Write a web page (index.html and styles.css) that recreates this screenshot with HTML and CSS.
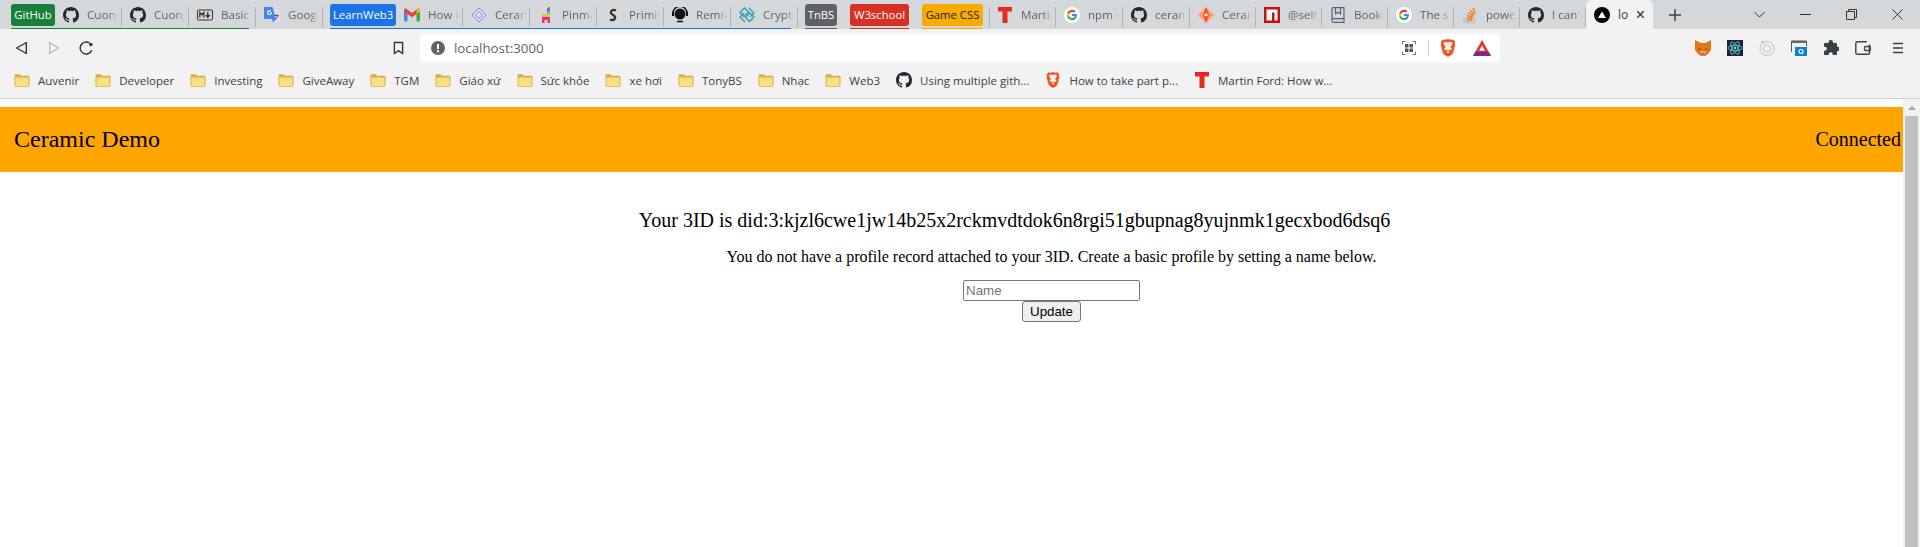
FILE: index.html
```html
<!DOCTYPE html>
<html lang="en">
<head>
  <meta charset="UTF-8" />
  <title>localhost:3000</title>
  <link rel="stylesheet" href="styles.css">
</head>
<body>

  <!-- shared icons -->
  <svg class="defs" width="0" height="0">
    <symbol id="gh" viewBox="0 0 16 16">
      <path fill="#24292e" d="M8 0C3.58 0 0 3.58 0 8c0 3.54 2.29 6.53 5.47 7.59.4.07.55-.17.55-.38 0-.19-.01-.82-.01-1.49-2.01.37-2.53-.49-2.69-.94-.09-.23-.48-.94-.82-1.13-.28-.15-.68-.52-.01-.53.63-.01 1.08.58 1.23.82.72 1.21 1.87.87 2.33.66.07-.52.28-.87.51-1.07-1.78-.2-3.64-.89-3.64-3.95 0-.87.31-1.59.82-2.15-.08-.2-.36-1.02.08-2.12 0 0 .67-.21 2.2.82.64-.18 1.32-.27 2-.27.68 0 1.36.09 2 .27 1.53-1.04 2.2-.82 2.2-.82.44 1.1.16 1.92.08 2.12.51.56.82 1.27.82 2.15 0 3.07-1.87 3.75-3.65 3.95.29.25.54.73.54 1.48 0 1.07-.01 1.93-.01 2.2 0 .21.15.46.55.38A8.013 8.013 0 0016 8c0-4.42-3.58-8-8-8z"/>
    </symbol>
    <symbol id="goog" viewBox="0 0 24 24">
      <circle cx="12" cy="12" r="12" fill="#fff"/>
      <g transform="translate(3.6 3.6) scale(.7)">
        <path fill="#4285F4" d="M22.56 12.25c0-.78-.07-1.53-.2-2.25H12v4.26h5.92c-.26 1.37-1.04 2.53-2.21 3.31v2.77h3.57c2.08-1.92 3.28-4.74 3.28-8.09z"/>
        <path fill="#34A853" d="M12 23c2.97 0 5.46-.98 7.28-2.66l-3.57-2.77c-.98.66-2.23 1.06-3.71 1.06-2.86 0-5.29-1.93-6.16-4.53H2.18v2.84C3.99 20.53 7.7 23 12 23z"/>
        <path fill="#FBBC05" d="M5.84 14.09c-.22-.66-.35-1.36-.35-2.09s.13-1.43.35-2.09V7.07H2.18C1.43 8.55 1 10.22 1 12s.43 3.45 1.18 4.93l3.66-2.84z"/>
        <path fill="#EA4335" d="M12 5.38c1.62 0 3.06.56 4.21 1.64l3.15-3.15C17.45 2.09 14.97 1 12 1 7.7 1 3.99 3.47 2.18 7.07l3.66 2.84c.87-2.6 3.3-4.53 6.16-4.53z"/>
      </g>
    </symbol>
    <symbol id="ted" viewBox="0 0 16 16">
      <path fill="#e62b1e" d="M1 0h14v4.500h-4.500V16h-5V4.500H1z"/>
    </symbol>
    <symbol id="ceramic" viewBox="0 0 16 16">
      <path fill="#ff9a73" d="M8 0l8 8-8 8-8-8z"/>
      <path fill="#f4511e" d="M8 0l3 8-3 8-3-8z"/>
      <path fill="#fff" d="M6.500 6.800h3v2.400h-3z"/>
    </symbol>
    <symbol id="folder" viewBox="0 0 16 13">
      <path fill="#d9ad48" d="M.5 1.500C.5.800 1 .3 1.700.3h4L7 1.800h7.300c.7 0 1.200.5 1.200 1.200v8.500c0 .7-.5 1.200-1.200 1.200H1.700c-.7 0-1.200-.5-1.200-1.200z"/>
      <path fill="#fcdf80" d="M1.500 3.500h13v8c0 .2-.2.400-.4.400H1.900c-.2 0-.4-.2-.4-.4z"/>
    </symbol>
    <symbol id="brave" viewBox="0 0 16 18">
      <path fill="#f1562b" d="M8 0l3 .8 2-.4 2.200 2.400-.6 1.400.6 1.800-2 7.400c-.4 1.300-1 1.900-2 2.500L8 18l-3.200-1.900c-1-.6-1.600-1.200-2-2.500l-2-7.400.6-1.800-.6-1.400L3 .4l2 .4z"/>
      <path fill="#fff" d="M8 3.200l3.500-.2.900 1.600-.9 1.600-1.300 1.800 1.700 1.800-1.400 1.500L9 10.700l-1 .8 1.500 1.200L8 14l-1.500-1.300 1.500-1.200-1-.8-1.500.6-1.400-1.500 1.700-1.800-1.300-1.800-.9-1.600.9-1.600z" opacity=".92"/>
    </symbol>
  </svg>

  <!-- browser chrome -->
  <header class="browser">
    <div class="tabstrip">
      <div class="group group-green">
        <span class="chip chip-green">GitHub</span>
        <div class="tab"><svg class="fav"><use href="#gh"/></svg><span class="tab-title">Cuong</span></div>
        <div class="tab"><svg class="fav"><use href="#gh"/></svg><span class="tab-title">Cuong</span></div>
        <div class="tab">
          <svg class="fav" viewBox="0 0 16 16"><rect x=".5" y="3" width="15" height="10" rx="1" fill="none" stroke="#333"/><path fill="none" stroke="#333" stroke-width="1.300" d="M2.800 10.500v-5l2 2.200 2-2.200v5M10.800 5v5M8.800 8l2 2.200 2-2.200"/></svg>
          <span class="tab-title">Basic</span>
        </div>
      </div>
      <div class="tab">
        <svg class="fav" viewBox="0 0 16 16"><path fill="#ddd" d="M7 3h8c.5 0 1 .5 1 1v10c0 .6-.4 1-1 1H8z"/><path fill="#4285f4" d="M1 0h7.500L12 12H1c-.6 0-1-.4-1-1V1c0-.6.4-1 1-1z"/><path fill="#fff" d="M3 5.500a2.500 2.500 0 014.200-1.700l-.8.8a1.400 1.400 0 10.400 1.500H5.500V5.200h2.500v.5A2.500 2.500 0 013 5.500z"/><path stroke="#555" fill="none" d="M10.500 8.500h4M12.500 7.500v1M14 8.500c-.5 2-2 3.500-3.500 4"/><path fill="#4285f4" d="M8 12h4l-3 3.500z"/></svg>
        <span class="tab-title">Googl</span>
      </div>
      <div class="group group-blue">
        <span class="chip chip-blue">LearnWeb3</span>
        <div class="tab">
          <svg class="fav" viewBox="0 0 16 13"><path fill="#4285f4" d="M0 2v9.500c0 .8.700 1.500 1.500 1.500H3.500V5.500z"/><path fill="#34a853" d="M12.500 5.500V13h2c.8 0 1.500-.7 1.500-1.500V2z"/><path fill="#ea4335" d="M0 1.500C0 0 1.700-.5 2.600.4L8 4.500 13.400.4C14.300-.5 16 0 16 1.500V3L12.500 5.600 8 9 3.500 5.600 0 3z"/><path fill="#fbbc04" d="M12.500 2.500l1-2c1-.7 2.500 0 2.500 1V3l-3.500 2.600z" /></svg>
          <span class="tab-title">How i</span>
        </div>
        <div class="tab">
          <svg class="fav" viewBox="0 0 16 16"><path fill="#dbe3fb" stroke="#6a86e8" d="M8 1l7 7-7 7-7-7z"/><path fill="none" stroke="#6a86e8" d="M4.500 8L8 4.500 11.500 8 8 11.500z"/></svg>
          <span class="tab-title">Ceran</span>
        </div>
        <div class="tab">
          <svg class="fav" viewBox="0 0 16 16"><path fill="#e6337f" d="M4 10h8v3H4z"/><path fill="#f2c230" d="M4 7h8v3H4z"/><path fill="#39c1d6" d="M9 4h3v3H9z"/><path fill="#8b5cc4" d="M9 1h3v3H9z"/><path fill="#39b54a" d="M10 0h2v1.500h-2z"/><path fill="#e6337f" d="M4 13h2.500v3H4zM9.500 13H12v3H9.500z"/></svg>
          <span class="tab-title">Pinma</span>
        </div>
        <div class="tab">
          <svg class="fav" viewBox="0 0 16 16"><path fill="none" stroke="#333" stroke-width="2.400" d="M11 3.500C8 2 5.500 3.500 6 6c.3 1.200 2 1.800 2 1.800M5 12.500c3 1.500 5.500 0 5-2.500-.3-1.200-2-1.800-2-1.800"/></svg>
          <span class="tab-title">Primit</span>
        </div>
        <div class="tab">
          <svg class="fav" viewBox="0 0 16 16"><circle cx="8" cy="7" r="5.500" fill="#111"/><path fill="none" stroke="#111" stroke-width="1.500" d="M.8 8.500V6.500A7.200 7.200 0 0115.200 6.500V8.500M5 14.500h6"/><rect x="0" y="5" width="2" height="4" fill="#111"/><rect x="14" y="5" width="2" height="4" fill="#111"/></svg>
          <span class="tab-title">Remix</span>
        </div>
        <div class="tab">
          <svg class="fav" viewBox="0 0 16 16"><g fill="none" stroke="#2a9cb0" stroke-width="1.300"><path d="M1 5.500l4.500-4.500 4 4-4.500 4.500z"/><path d="M6.500 10.500l4.500-4.500 4 4-4.500 4.500z"/><path d="M10 1l5 5-4 4M6 15l-5-5 4-4"/></g></svg>
          <span class="tab-title">Crypto</span>
        </div>
      </div>
      <div class="group group-gray"><span class="chip chip-gray">TnBS</span></div>
      <div class="group group-red"><span class="chip chip-red">W3school</span></div>
      <div class="group group-amber"><span class="chip chip-amber">Game CSS</span></div>
      <div class="tab tab-first"><svg class="fav"><use href="#ted"/></svg><span class="tab-title">Martin</span></div>
      <div class="tab"><svg class="fav"><use href="#goog"/></svg><span class="tab-title">npm s</span></div>
      <div class="tab"><svg class="fav"><use href="#gh"/></svg><span class="tab-title">ceram</span></div>
      <div class="tab tab-narrow"><svg class="fav"><use href="#ceramic"/></svg><span class="tab-title">Ceran</span></div>
      <div class="tab tab-narrow">
        <svg class="fav" viewBox="0 0 16 16"><rect width="16" height="16" fill="#c70f14"/><path fill="#fff" d="M2.500 2.500h11v11h-3V5.500H8v8H2.500z"/></svg>
        <span class="tab-title">@self</span>
      </div>
      <div class="tab tab-narrow">
        <svg class="fav" viewBox="0 0 16 16"><path fill="none" stroke="#5c6078" stroke-width="1.200" d="M2 13.500V1.500C2 1 2.400.6 3 .6h11v11H3.500C2.700 11.600 2 12.300 2 13.500c0 1 .7 1.800 1.500 1.800H14v-3.700M5.500.8v6l2.500-1.600 2.500 1.600v-6"/></svg>
        <span class="tab-title">Bookr</span>
      </div>
      <div class="tab tab-narrow"><svg class="fav"><use href="#goog"/></svg><span class="tab-title">The s</span></div>
      <div class="tab tab-narrow">
        <svg class="fav" viewBox="0 0 16 16"><path fill="none" stroke="#bcbbbb" stroke-width="1.300" d="M2 10v5h10.500v-5"/><path fill="none" stroke="#f48024" stroke-width="1.500" d="M4.300 13h6.200M4.500 10.800l6 .6M5 8.400l5.900 1.500M6.200 5.700l5.200 3M8.200 3.200l4 4.300M11 1l2.200 5.500"/></svg>
        <span class="tab-title">power</span>
      </div>
      <div class="tab tab-narrow"><svg class="fav"><use href="#gh"/></svg><span class="tab-title">I can't</span></div>
      <div class="tab-active">
        <svg class="fav" viewBox="0 0 16 16"><circle cx="8" cy="8" r="8" fill="#000"/><path fill="#fff" d="M8 4.500l4 6.500H4z"/></svg>
        <span class="active-title">lo</span>
        <svg class="tab-close" viewBox="0 0 10 10"><path stroke="#3c4043" stroke-width="1.600" d="M1.500 1.500l7 7M8.500 1.500l-7 7"/></svg>
      </div>
      <svg class="new-tab" viewBox="0 0 12 12"><path stroke="#3c4043" stroke-width="1.500" d="M6 0v12M0 6h12"/></svg>
      <div class="win-controls">
        <svg class="win-btn" viewBox="0 0 11 11"><path fill="none" stroke="#333" d="M.5 3l5 5 5-5"/></svg>
        <svg class="win-btn" viewBox="0 0 11 11"><path stroke="#333" d="M0 5.500h11"/></svg>
        <svg class="win-btn" viewBox="0 0 11 11"><path fill="none" stroke="#333" d="M.5 2.500h8v8h-8zM2.500 2.500v-2h8v8h-2"/></svg>
        <svg class="win-btn" viewBox="0 0 11 11"><path stroke="#333" d="M.5.500l10 10M10.500.500l-10 10"/></svg>
      </div>
    </div>

    <div class="toolbar">
      <svg class="nav-btn" viewBox="0 0 14 14"><path fill="none" stroke="#333" stroke-width="1.400" stroke-linejoin="round" d="M12.300 1.500v11L2.700 7z"/></svg>
      <svg class="nav-btn nav-off" viewBox="0 0 14 14"><path fill="none" stroke="#b9bbbd" stroke-width="1.400" stroke-linejoin="round" d="M2.700 1.500v11L11.500 7z"/></svg>
      <svg class="nav-btn" viewBox="0 0 14 14"><path fill="none" stroke="#333" stroke-width="1.400" d="M12.800 9.200A6 6 0 1110.500 2"/><circle cx="11.800" cy="3.500" r="1.800" fill="#333"/></svg>
      <svg class="bookmark-btn" viewBox="0 0 12 14"><path fill="none" stroke="#333" stroke-width="1.500" d="M1.500 1h9v12L6 9.800 1.500 13z"/></svg>
      <div class="omnibox">
        <svg class="info" viewBox="0 0 14 14"><circle cx="7" cy="7" r="7" fill="#5f6368"/><path fill="#fff" d="M6 3h2v5H6zM6 9.300h2v2H6z"/></svg>
        <span class="url">localhost:3000</span>
        <svg class="qr" viewBox="0 0 14 14"><path fill="none" stroke="#777" d="M.5 3.500v-3h3M10.500.5h3v3M13.500 10.500v3h-3M3.500 13.500h-3v-3"/><path fill="#555" d="M3 3h3.500v3.500H3zM7.500 3H11v3.500H7.500zM3 7.500h3.500V11H3zM7.500 7.500H11V11H7.500z"/></svg>
        <span class="omni-sep"></span>
        <svg class="omni-icon omni-brave"><use href="#brave"/></svg>
        <svg class="omni-icon" viewBox="0 0 18 16"><path fill="#e5322e" d="M9 0l9 16H0z"/><path fill="#7b2a8e" d="M0 16l2.500-4.300h13L18 16z"/><path fill="#fff" d="M9 5.500l3 5.200H6z"/></svg>
      </div>
      <div class="extensions">
        <svg class="ext" viewBox="0 0 16 16"><path fill="#e2761b" d="M0 0l6 3h4l6-3 0 6 0 4-3 4-3 2H6l-3-2-3-4 0-4z"/><path fill="#763d16" d="M3 8l3 1-1 1zM13 8l-3 1 1 1z"/><path fill="#f6d2b0" d="M5 11l3 4 3-4-3 1z"/><path fill="#161616" d="M7 13h2l-1 1.500z"/></svg>
        <svg class="ext" viewBox="0 0 16 16"><rect width="16" height="16" fill="#20232a"/><g fill="none" stroke="#61dafb" stroke-width=".8"><ellipse cx="8" cy="8" rx="7" ry="2.800"/><ellipse cx="8" cy="8" rx="7" ry="2.800" transform="rotate(60 8 8)"/><ellipse cx="8" cy="8" rx="7" ry="2.800" transform="rotate(120 8 8)"/></g><circle cx="8" cy="8" r="1.400" fill="#61dafb"/></svg>
        <svg class="ext" viewBox="0 0 16 16"><circle cx="8" cy="8.500" r="7" fill="none" stroke="#d2d2d2" stroke-width="1.500"/><circle cx="8" cy="8.500" r="3.500" fill="none" stroke="#d2d2d2" stroke-width="1.500"/><circle cx="3.500" cy="2" r="1.300" fill="#bdbdbd"/></svg>
        <svg class="ext" viewBox="0 0 16 16"><path fill="none" stroke="#555" d="M.5 12V1h15v5"/><rect x="1" y="1" width="14" height="2" fill="#666"/><rect x="4" y="7" width="12" height="9" fill="#0b7fd0"/><circle cx="10" cy="11.500" r="2" fill="none" stroke="#fff" stroke-width="1.200"/></svg>
        <svg class="ext" viewBox="0 0 16 16"><path fill="#3c4043" d="M5.500 3V2.300a2.300 2.300 0 014.600 0V3H13c.6 0 1 .4 1 1v2.700h.7a2.300 2.300 0 010 4.600H14V14c0 .6-.4 1-1 1H9.700v-.8a2 2 0 00-4 0v.8H2c-.6 0-1-.4-1-1v-3.300h.8a2 2 0 000-4H1V4c0-.6.4-1 1-1z"/></svg>
        <svg class="ext" viewBox="0 0 16 14"><path fill="none" stroke="#3c4043" stroke-width="1.400" d="M14.500 3.500V12c0 .8-.6 1.300-1.300 1.300H2.500c-.9 0-1.700-.7-1.700-1.600V2.500C.8 1.500 1.600.8 2.500.8h9.300"/><rect x="9.500" y="5.500" width="6" height="4" rx="1" fill="none" stroke="#3c4043" stroke-width="1.300"/></svg>
        <svg class="ext ext-menu" viewBox="0 0 12 12"><path stroke="#3c4043" stroke-width="1.500" d="M1 1.500h10M1 6h10M1 10.500h10"/></svg>
      </div>
    </div>

    <nav class="bookmarks">
      <a class="mark"><svg class="folder"><use href="#folder"/></svg>Auvenir</a>
      <a class="mark"><svg class="folder"><use href="#folder"/></svg>Developer</a>
      <a class="mark"><svg class="folder"><use href="#folder"/></svg>Investing</a>
      <a class="mark"><svg class="folder"><use href="#folder"/></svg>GiveAway</a>
      <a class="mark"><svg class="folder"><use href="#folder"/></svg>TGM</a>
      <a class="mark"><svg class="folder"><use href="#folder"/></svg>Giáo xứ</a>
      <a class="mark"><svg class="folder"><use href="#folder"/></svg>Sức khỏe</a>
      <a class="mark"><svg class="folder"><use href="#folder"/></svg>xe hơi</a>
      <a class="mark"><svg class="folder"><use href="#folder"/></svg>TonyBS</a>
      <a class="mark"><svg class="folder"><use href="#folder"/></svg>Nhạc</a>
      <a class="mark"><svg class="folder"><use href="#folder"/></svg>Web3</a>
      <a class="mark"><svg class="mark-icon"><use href="#gh"/></svg>Using multiple gith...</a>
      <a class="mark"><svg class="mark-icon"><use href="#brave"/></svg>How to take part p...</a>
      <a class="mark"><svg class="mark-icon"><use href="#ted"/></svg>Martin Ford: How w...</a>
    </nav>
  </header>

  <!-- page -->
  <div class="viewport">
    <div class="page">
      <div class="topbar">
        <span class="brand">Ceramic Demo</span>
        <span class="status">Connected</span>
      </div>
      <main class="content">
        <h2 class="did">Your 3ID is did:3:kjzl6cwe1jw14b25x2rckmvdtdok6n8rgi51gbupnag8yujnmk1gecxbod6dsq6</h2>
        <p class="hint">You do not have a profile record attached to your 3ID. Create a basic profile by setting a name below.</p>
        <form class="profile-form">
          <input class="name-input" type="text" placeholder="Name">
          <button class="update-btn" type="button">Update</button>
        </form>
      </main>
    </div>
    <div class="scrollbar">
      <span class="arrow"></span>
      <span class="thumb"></span>
    </div>
  </div>

</body>
</html>
```

FILE: styles.css
```css
html, body {
  margin: 0;
  padding: 0;
  height: 100%;
  overflow: hidden;
}

body {
  display: flex;
  flex-direction: column;
  background-color: #ffffff;
  font-family: 'Liberation Serif', 'Times New Roman', serif;
}

.defs {
  position: absolute;
}

/* tab strip */
.browser {
  flex: none;
  font-family: 'Open Sans', 'Noto Sans', sans-serif;
  color: #3c4043;
}

.tabstrip {
  display: flex;
  align-items: stretch;
  height: 29px;
  padding-left: 11px;
  background-color: #d5d8db;
}

.group {
  display: flex;
  align-items: stretch;
  position: relative;
}

.group::after {
  content: "";
  position: absolute;
  left: 0;
  bottom: 0;
  height: 1px;
  right: 0;
}

.group-green::after { background-color: #188038; right: 7px; }
.group-blue::after { background-color: #1a73e8; right: 7px; }
.group-gray::after { background-color: #5f6368; }
.group-red::after { background-color: #d93025; }
.group-amber::after { background-color: #f9ab00; }

.group-blue { margin-left: 7px; }
.group-gray { margin-left: 7px; }
.group-red { margin-left: 13px; }
.group-amber { margin-left: 13px; }

.chip {
  align-self: flex-start;
  margin-top: 4px;
  height: 22px;
  line-height: 21px;
  border-radius: 3px;
  font-size: 11.3px;
  white-space: nowrap;
  color: #ffffff;
  text-align: center;
}

.chip-green { background-color: #188038; width: 44px; }
.chip-blue { background-color: #1a73e8; width: 66px; }
.chip-gray { background-color: #5f6368; width: 32px; }
.chip-red { background-color: #d93025; width: 59px; }
.chip-amber { background-color: #f9ab00; width: 61px; color: #202124; }

.tab {
  display: flex;
  align-items: center;
  flex: none;
  width: 67px;
  height: 29px;
  box-sizing: border-box;
  padding: 0 4px 0 8px;
  overflow: hidden;
  position: relative;
}

.tab-narrow {
  width: 66px;
}

.tab::after {
  content: "";
  position: absolute;
  right: 0;
  top: 7px;
  width: 1px;
  height: 20px;
  background-color: #b0b3b6;
}

.tab-first {
  margin-left: 6px;
}

.tab-first::before {
  content: "";
  position: absolute;
  left: 0;
  top: 7px;
  width: 1px;
  height: 20px;
  background-color: #b0b3b6;
}

.fav {
  flex: none;
  width: 16px;
  height: 16px;
  margin-right: 8px;
}

.tab-title {
  font-size: 11.6px;
  color: #5f6368;
  white-space: nowrap;
  overflow: hidden;
  flex: 1;
  -webkit-mask-image: linear-gradient(to right, #000 70%, transparent);
  mask-image: linear-gradient(to right, #000 70%, transparent);
}

.tab-active {
  display: flex;
  align-items: center;
  flex: none;
  width: 67px;
  height: 29px;
  box-sizing: border-box;
  padding: 0 8px;
  background-color: #f2f2f2;
  border-radius: 6px 6px 0 0;
}

.active-title {
  flex: 1;
  font-size: 12px;
  color: #3c4043;
}

.tab-close {
  width: 9px;
  height: 9px;
  flex: none;
}

.new-tab {
  width: 12px;
  height: 12px;
  margin: 9px 0 0 16px;
}

.win-controls {
  display: flex;
  align-items: center;
  gap: 35px;
  margin-left: auto;
  padding-right: 17px;
  height: 29px;
}

.win-btn {
  width: 11px;
  height: 11px;
}

/* toolbar */
.toolbar {
  display: flex;
  align-items: center;
  height: 38px;
  padding-left: 14px;
  background-color: #f2f2f2;
}

.nav-btn {
  width: 14px;
  height: 14px;
  margin-right: 18px;
}

.nav-off {
  margin-left: 1px;
}

.bookmark-btn {
  width: 11px;
  height: 14px;
  margin-left: 282px;
}

.omnibox {
  display: flex;
  align-items: center;
  width: 1080px;
  height: 28px;
  margin-left: 16px;
  padding-left: 11px;
  box-sizing: border-box;
  background-color: #ffffff;
  border-radius: 4px;
}

.info {
  width: 14px;
  height: 14px;
  margin-right: 9px;
}

.url {
  font-size: 13.3px;
  color: #5f6368;
}

.qr {
  width: 14px;
  height: 14px;
  margin-left: auto;
}

.omni-sep {
  width: 1px;
  height: 16px;
  margin: 0 11px 0 12px;
  background-color: #c4c7c9;
}

.omni-icon {
  width: 18px;
  height: 16px;
  margin-right: 9px;
}

.omni-brave {
  width: 16px;
  height: 18px;
  margin-right: 17px;
}

.extensions {
  display: flex;
  align-items: center;
  margin-left: auto;
  padding-right: 16px;
}

.ext {
  width: 16px;
  height: 16px;
  margin-left: 16px;
}

.ext-menu {
  width: 12px;
  height: 12px;
  margin-left: 21px;
}

/* bookmarks bar */
.bookmarks {
  display: flex;
  align-items: center;
  height: 26px;
  padding: 0 0 5px 14px;
  background-color: #f2f2f2;
  border-bottom: 1px solid #d0d2d4;
  gap: 16px;
  font-size: 11.5px;
  white-space: nowrap;
}

.mark {
  display: flex;
  align-items: center;
  color: #3c4043;
}

.folder {
  width: 16px;
  height: 13px;
  margin-right: 8px;
}

.mark-icon {
  width: 16px;
  height: 16px;
  margin-right: 8px;
}

/* page content */
.viewport {
  flex: 1;
  display: flex;
  min-height: 0;
}

.page {
  flex: 1;
  padding-top: 8px;
  min-width: 0;
}

.topbar {
  display: flex;
  justify-content: space-between;
  align-items: center;
  height: 65px;
  padding: 0 2px 0 14px;
  background-color: #ffa500;
  font-size: 24px;
  color: #000000;
}

.status {
  font-size: 20px;
}

.content {
  display: flex;
  flex-direction: column;
  align-items: center;
  padding: 37px 0 0 200px;
}

.did {
  margin: 0 74px 0 0;
  font-size: 20px;
  font-weight: normal;
  line-height: 23px;
  white-space: nowrap;
}

.hint {
  margin: 16px 0 0;
  font-size: 16px;
  line-height: 18px;
}

.profile-form {
  display: flex;
  flex-direction: column;
  align-items: center;
  margin-top: 14px;
}

.name-input {
  width: 177px;
  height: 21px;
  box-sizing: border-box;
  padding: 1px 2px;
  border: 1px solid #767676;
  border-radius: 2px;
  font-family: 'Liberation Sans', Arial, sans-serif;
  font-size: 13.33px;
}

.update-btn {
  width: 59px;
  height: 21px;
  padding: 1px 6px;
  border: 1px solid #767676;
  border-radius: 3px;
  background-color: #efefef;
  font-family: 'Liberation Sans', Arial, sans-serif;
  font-size: 13.33px;
}

.scrollbar {
  flex: none;
  display: flex;
  flex-direction: column;
  align-items: center;
  width: 17px;
  background-color: #f1f1f1;
}

.arrow {
  margin-top: 7px;
  width: 0;
  height: 0;
  border-left: 4px solid transparent;
  border-right: 4px solid transparent;
  border-bottom: 4px solid #a3a3a3;
}

.thumb {
  flex: 1;
  width: 13px;
  margin-top: 6px;
  background-color: #c1c1c1;
}
```
